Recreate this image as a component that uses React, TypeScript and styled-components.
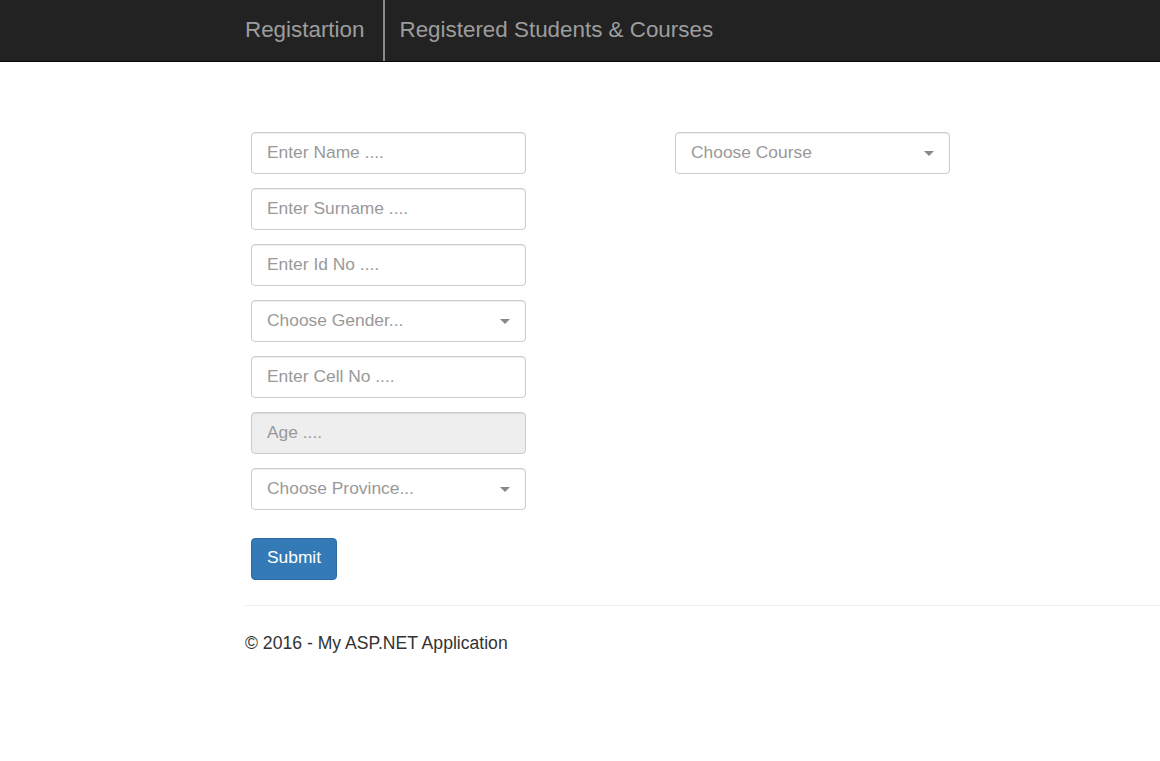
import React from "react";
import styled, { createGlobalStyle } from "styled-components";

const Global = createGlobalStyle`
  html, body { margin: 0; padding: 0; background: #fff; }
  body { font-family: "Liberation Sans", Arial, sans-serif; font-size: 17.4px; color: #333; }
  * { box-sizing: border-box; }
`;

const Navbar = styled.nav`
  height: 62px;
  background: #222;
  border-bottom: 1px solid #080808;
  display: flex;
`;

const NavInner = styled.div`
  margin-left: 230px;
  display: flex;
  height: 61px;
`;

const NavLink = styled.a<{ $divider?: boolean; $pl: number; $pr: number }>`
  display: flex;
  align-items: center;
  height: 61px;
  padding: 0 ${(p) => p.$pr}px 1px ${(p) => p.$pl}px;
  color: #9d9d9d;
  font-size: 22.4px;
  text-decoration: none;
  border-right: ${(p) => (p.$divider ? "2px solid #8a8a8a" : "none")};
`;

const Page = styled.div`
  padding: 70px 0 0 245px;
`;

const FormRow = styled.div`
  display: flex;
  gap: 149px;
  padding-left: 6px;
`;

const Column = styled.div`
  display: flex;
  flex-direction: column;
  gap: 14px;
  width: 275px;
`;

const Field = styled.div<{ $disabled?: boolean }>`
  position: relative;
  height: 42px;
  border: 1px solid #ccc;
  border-radius: 4px;
  background: ${(p) => (p.$disabled ? "#eee" : "#fff")};
  box-shadow: inset 0 1px 1px rgba(0, 0, 0, 0.075);
  display: flex;
  align-items: center;
  padding: 0 15px 2px;
  color: #999;
  font-size: 17.4px;
`;

const Caret = styled.span`
  position: absolute;
  right: 15px;
  top: 18px;
  width: 0;
  height: 0;
  border-left: 5px solid transparent;
  border-right: 5px solid transparent;
  border-top: 5px solid #888;
`;

const SubmitButton = styled.button`
  margin-top: 14px;
  width: 86px;
  height: 42px;
  background: #337ab7;
  border: 1px solid #2e6da4;
  border-radius: 4px;
  color: #fff;
  font-family: "Liberation Sans", Arial, sans-serif;
  font-size: 17.4px;
  padding: 0 0 3px;
`;

const Rule = styled.hr`
  margin: 25px 0 0;
  border: 0;
  border-top: 1px solid #eee;
`;

const Footer = styled.footer`
  padding-top: 27px;
  font-size: 17.6px;
  color: #333;
`;

const Select = ({ label }: { label: string }) => (
  <Field>
    {label}
    <Caret />
  </Field>
);

export default function App() {
  return (
    <>
      <Global />
      <Navbar>
        <NavInner>
          <NavLink href="#" $divider $pl={15} $pr={19}>
            Registartion
          </NavLink>
          <NavLink href="#" $pl={14} $pr={15}>
            Registered Students &amp; Courses
          </NavLink>
        </NavInner>
      </Navbar>
      <Page>
        <FormRow>
          <Column>
            <Field>Enter Name ....</Field>
            <Field>Enter Surname ....</Field>
            <Field>Enter Id No ....</Field>
            <Select label="Choose Gender..." />
            <Field>Enter Cell No ....</Field>
            <Field $disabled>Age ....</Field>
            <Select label="Choose Province..." />
            <SubmitButton>Submit</SubmitButton>
          </Column>
          <Column>
            <Select label="Choose Course" />
          </Column>
        </FormRow>
        <Rule />
        <Footer>© 2016 - My ASP.NET Application</Footer>
      </Page>
    </>
  );
}
